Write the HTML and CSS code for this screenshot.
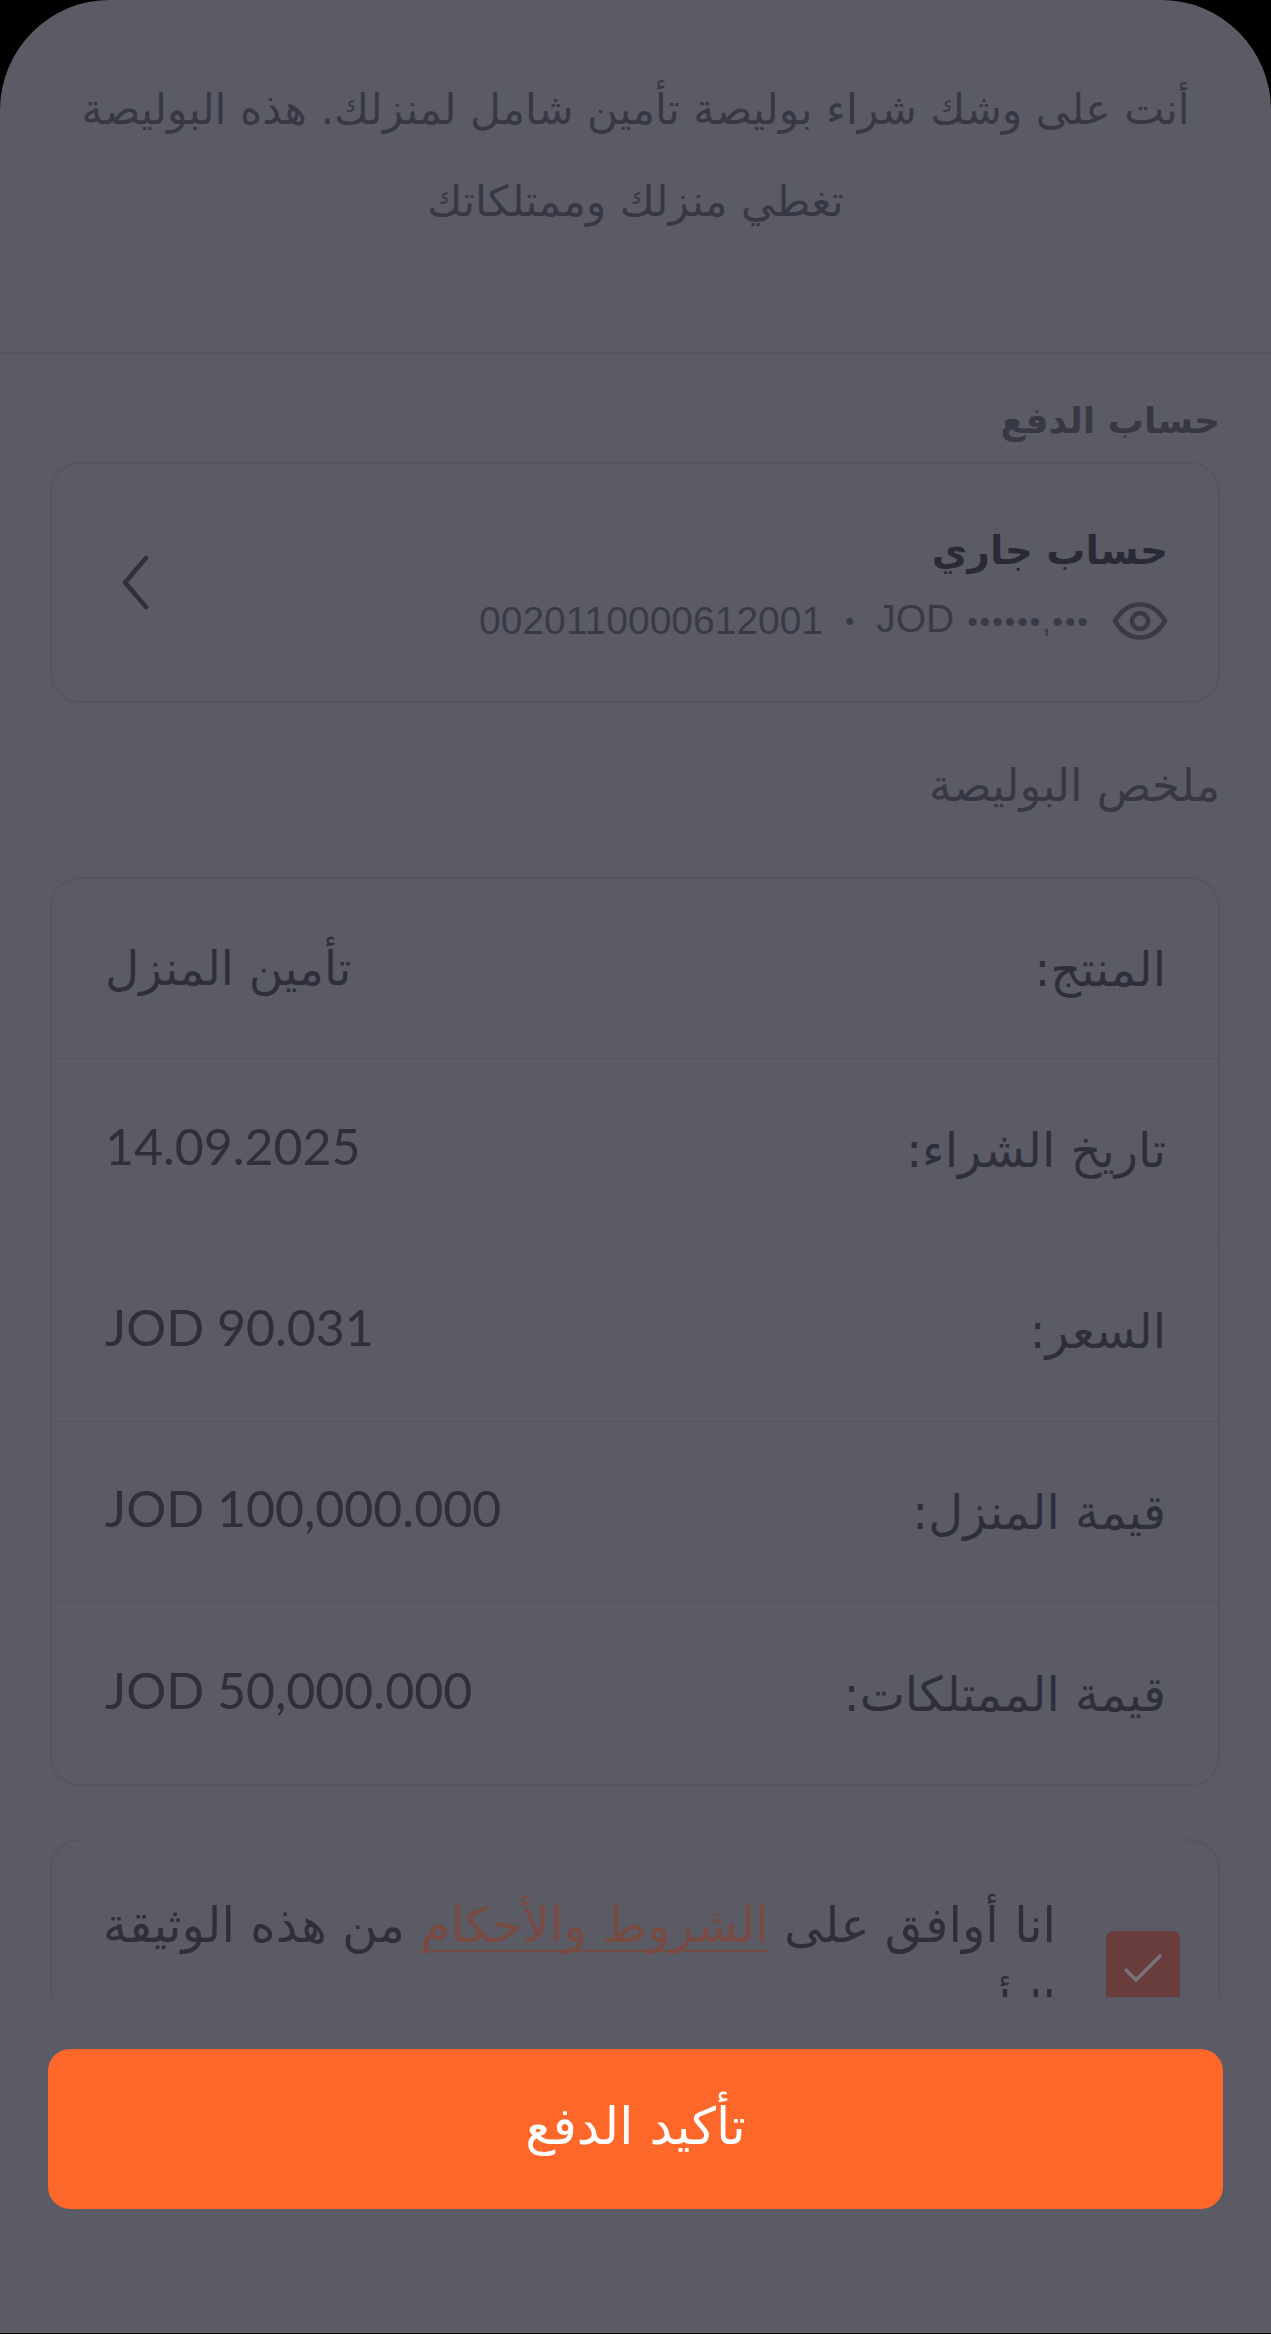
FILE: index.html
```html
<!DOCTYPE html>
<html lang="ar" dir="rtl">
<head>
    <meta charset="UTF-8">
    <meta name="viewport" content="width=device-width, initial-scale=1.0">
    <title>تأكيد الدفع</title>
    <link rel="stylesheet" href="styles.css">
</head>
<body>
    <div class="screen">
        <div class="scroll">
            <div class="intro">
                <p>أنت على وشك شراء بوليصة تأمين شامل لمنزلك. هذه البوليصة تغطي منزلك وممتلكاتك</p>
            </div>

            <div class="content">
                <h2 class="account-label">حساب الدفع</h2>
                <div class="card account">
                    <div class="account-info">
                        <div class="account-name">حساب جاري</div>
                        <div class="account-meta">
                            <svg class="eye" viewBox="0 0 56 38" width="56" height="38">
                                <path d="M3 19C10 7 18 2.500 28 2.500S46 7 53 19c-7 12-15 16.500-25 16.500S10 31 3 19z" fill="none" stroke="#3a3a47" stroke-width="4.500" stroke-linejoin="round"/>
                                <circle cx="28" cy="19" r="8" fill="none" stroke="#3a3a47" stroke-width="4.500"/>
                            </svg>
                            <span class="mask" dir="ltr">JOD <span class="dots">••••••,•••</span></span>
                            <span class="dot">•</span>
                            <span class="number">0020110000612001</span>
                        </div>
                    </div>
                    <svg class="chevron" viewBox="0 0 27 55" width="27" height="55">
                        <path d="M24 3L3 27.500L24 52" fill="none" stroke="#30303c" stroke-width="4.500" stroke-linecap="round" stroke-linejoin="round"/>
                    </svg>
                </div>

                <h2 class="summary-label">ملخص البوليصة</h2>
                <div class="card summary">
                    <div class="row"><span>المنتج:</span><span class="text">تأمين المنزل</span></div>
                    <div class="row"><span>تاريخ الشراء:</span><span class="num" dir="ltr">14.09.2025</span></div>
                    <div class="row"><span>السعر:</span><span class="num" dir="ltr">JOD 90.031</span></div>
                    <div class="row"><span>قيمة المنزل:</span><span class="num" dir="ltr">JOD 100,000.000</span></div>
                    <div class="row"><span>قيمة الممتلكات:</span><span class="num" dir="ltr">JOD 50,000.000</span></div>
                </div>

                <div class="card terms">
                    <div class="checkbox">
                        <svg viewBox="0 0 40 32" width="40" height="32">
                            <path d="M2 17L13 28L38 3" fill="none" stroke="#76737a" stroke-width="3.500"/>
                        </svg>
                    </div>
                    <p>انا أوافق على <a href="#">الشروط والأحكام</a> من هذه الوثيقة التأمينية</p>
                </div>
            </div>
        </div>

        <div class="footer">
            <button>تأكيد الدفع</button>
        </div>
    </div>
</body>
</html>
```

FILE: styles.css
```css
* {
    box-sizing: border-box;
}

html, body {
    margin: 0;
    padding: 0;
    background-color: #000;
}

body {
    font-family: "DejaVu Sans", "Noto Sans", sans-serif;
    color: #2f2f3b;
}

.screen {
    width: 1271px;
    height: 2333px;
    background-color: #5b5b66;
    border-radius: 110px 110px 0 0;
    overflow: hidden;
    display: flex;
    flex-direction: column;
}

.scroll {
    height: 1997px;
    overflow: hidden;
}

.intro {
    height: 354px;
    padding: 64px 70px 0;
    border-bottom: 2px solid #565661;
    text-align: center;
}

.intro p {
    margin: 0;
    font-size: 42.500px;
    line-height: 92px;
    color: #383844;
}

.content {
    padding: 0 51px 0 50px;
}

h2 {
    margin: 0;
}

.account-label {
    padding-top: 40px;
    height: 108px;
    font-size: 36px;
    line-height: 54px;
    font-weight: bold;
    color: #383844;
}

.summary-label {
    padding-top: 56px;
    height: 174px;
    font-size: 45px;
    line-height: 54px;
    font-weight: normal;
    color: #383844;
}

.card {
    border: 2px solid #565661;
    border-radius: 30px;
}

.account {
    height: 241px;
    padding: 0 50px 0 70px;
    display: flex;
    align-items: center;
    justify-content: space-between;
}

.account-name {
    font-size: 39px;
    font-weight: bold;
    line-height: 60px;
    color: #2a2a36;
}

.account-meta {
    display: flex;
    align-items: center;
    gap: 22px;
    margin-top: 16px;
    font-family: "Liberation Sans", sans-serif;
    font-size: 39px;
    line-height: 44px;
    color: #3a3a46;
}

.eye {
    display: block;
}

.dots {
    font-size: 30px;
    letter-spacing: 2px;
    margin-left: 2px;
}

.dot {
    font-size: 26px;
}

.chevron {
    display: block;
}

.summary {
    height: 909px;
    margin-bottom: 53px;
}

.row {
    height: 181px;
    padding: 0 52px 0 53px;
    display: flex;
    align-items: center;
    justify-content: space-between;
    font-size: 48px;
    border-bottom: 2px solid #575762;
}

.row:last-child {
    border-bottom: none;
}

.row .text {
    font-size: 47px;
}

.row .num {
    margin-bottom: 7px;
    font-family: "Lato", sans-serif;
    font-size: 50px;
}

.terms {
    height: 300px;
    padding: 42px 38px 0 48px;
    display: flex;
    gap: 50px;
}

.checkbox {
    flex: none;
    width: 74px;
    height: 74px;
    margin-top: 48px;
    background-color: #683d3b;
    border-radius: 7px;
    display: flex;
    align-items: center;
    justify-content: center;
}

.terms p {
    margin: 0;
    font-size: 48.500px;
    line-height: 84px;
}

.terms a {
    color: #784a42;
    text-underline-offset: 8px;
    text-decoration-thickness: 2px;
    text-decoration-skip-ink: none;
}

.footer {
    height: 336px;
    padding: 51px 48px 0;
    border-top: 1px solid #575762;
}

.footer button {
    display: block;
    width: 100%;
    height: 160px;
    padding: 0 0 6px;
    border: none;
    border-radius: 22px;
    background-color: #fd6729;
    color: #fff;
    font-family: inherit;
    font-size: 51px;
}
```
